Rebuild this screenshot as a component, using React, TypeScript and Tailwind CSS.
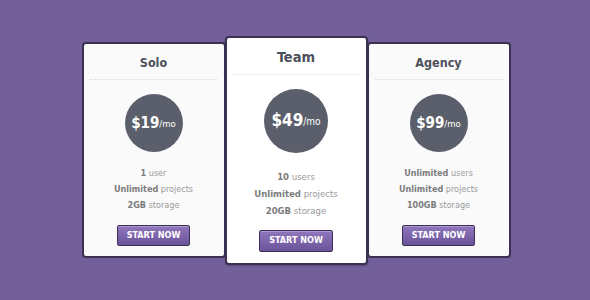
import * as React from "react";

type Plan = {
  name: string;
  price: string;
  features: Array<[string, string]>;
  featured?: boolean;
};

const plans: Plan[] = [
  { name: "Solo", price: "$19", features: [["1", "user"], ["Unlimited", "projects"], ["2GB", "storage"]] },
  { name: "Team", price: "$49", featured: true, features: [["10", "users"], ["Unlimited", "projects"], ["20GB", "storage"]] },
  { name: "Agency", price: "$99", features: [["Unlimited", "users"], ["Unlimited", "projects"], ["100GB", "storage"]] },
];

function PlanCard({ plan }: { plan: Plan }) {
  const f = plan.featured;
  return (
    <div
      className={
        f
          ? "relative z-10 -mx-[1px] flex h-[229px] w-[143px] flex-col items-center rounded-[4px] border-2 border-[#3b3152] bg-white px-[6px] shadow-[0_1px_2px_rgba(0,0,0,0.25)]"
          : "relative flex h-[216px] w-[144px] flex-col items-center rounded-[4px] border-2 border-[#3b3152] bg-[#fafafa] px-[6px]"
      }
    >
      <div
        className={
          f
            ? "pt-[10px] pb-[8px] text-[14.5px] font-bold leading-[18px] text-[#4c505b]"
            : "pt-[11px] pb-[8px] text-[12.5px] font-bold leading-[16px] text-[#4c505b]"
        }
      >
        {plan.name}
      </div>
      <div className="w-full border-t border-dotted border-[#dcdcdc]" />
      <div
        className={
          f
            ? "mt-[14px] flex h-[64px] w-[64px] items-center justify-center rounded-full bg-[#5b5f6b] text-white"
            : "mt-[14px] flex h-[58px] w-[58px] items-center justify-center rounded-full bg-[#5b5f6b] text-white"
        }
      >
        <span className={f ? "text-[17px] font-bold" : "text-[15px] font-bold"}>{plan.price}</span>
        <span className={f ? "text-[10px] mt-[2px]" : "text-[9.5px] mt-[2px]"}>/mo</span>
      </div>
      <div
        className={
          f
            ? "mt-[18px] flex flex-col items-center gap-[5px] text-[9.5px] leading-[12px] text-[#9a9a9a]"
            : "mt-[15px] flex flex-col items-center gap-[4px] text-[9px] leading-[12px] text-[#9a9a9a]"
        }
      >
        {plan.features.map(([b, rest]) => (
          <div key={b + rest}>
            <span className="font-bold text-[#7c7c7c]">{b}</span> {rest}
          </div>
        ))}
      </div>
      <button
        className={
          f
            ? "mt-[13px] h-[22px] w-[74px] rounded-[2px] border border-[#3b2f55] bg-gradient-to-b from-[#9077bd] to-[#6b539a] text-[9px] font-bold text-white shadow-[inset_0_1px_0_rgba(255,255,255,0.25)]"
            : "mt-[14px] h-[21px] w-[73px] rounded-[2px] border border-[#3b2f55] bg-gradient-to-b from-[#9077bd] to-[#6b539a] text-[9px] font-bold text-white shadow-[inset_0_1px_0_rgba(255,255,255,0.25)]"
        }
      >
        START NOW
      </button>
    </div>
  );
}

export default function App() {
  return (
    <div
      className="flex h-[300px] w-[590px] items-center justify-center bg-[#73609a] pl-[2px]"
      style={{ fontFamily: '"DejaVu Sans Condensed", "DejaVu Sans", Tahoma, sans-serif' }}
    >
      {plans.map((p) => (
        <PlanCard key={p.name} plan={p} />
      ))}
    </div>
  );
}
